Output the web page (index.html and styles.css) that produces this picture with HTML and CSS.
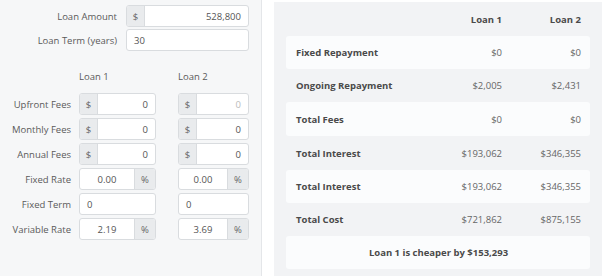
FILE: index.html
```html
<!DOCTYPE html>
<html>
<head>
	<meta charset="utf-8" />
	<title>Loan Comparison</title>
	<link rel="stylesheet" href="styles.css">
</head>
<body>
	<div class="page">
		<div class="inputs">
			<div class="top">
				<label>Loan Amount</label>
				<div class="group"><span class="addon">$</span><span class="field right">528,800</span></div>
				<label>Loan Term (years)</label>
				<div class="group"><span class="field">30</span></div>
			</div>

			<div class="loans">
				<span></span><p class="head">Loan 1</p><p class="head">Loan 2</p>

				<label>Upfront Fees</label>
				<div class="group"><span class="addon">$</span><span class="field right">0</span></div>
				<div class="group"><span class="addon">$</span><span class="field right empty">0</span></div>

				<label>Monthly Fees</label>
				<div class="group"><span class="addon">$</span><span class="field right">0</span></div>
				<div class="group"><span class="addon">$</span><span class="field right">0</span></div>

				<label>Annual Fees</label>
				<div class="group"><span class="addon">$</span><span class="field right">0</span></div>
				<div class="group"><span class="addon">$</span><span class="field right">0</span></div>

				<label>Fixed Rate</label>
				<div class="group"><span class="field center">0.00</span><span class="addon pct">%</span></div>
				<div class="group"><span class="field center">0.00</span><span class="addon pct">%</span></div>

				<label>Fixed Term</label>
				<div class="group"><span class="field">0</span></div>
				<div class="group"><span class="field">0</span></div>

				<label>Variable Rate</label>
				<div class="group"><span class="field center">2.19</span><span class="addon pct">%</span></div>
				<div class="group"><span class="field center">3.69</span><span class="addon pct">%</span></div>
			</div>
		</div>

		<div class="results">
			<div class="row head-row h34"><span></span><span>Loan 1</span><span>Loan 2</span></div>
			<div class="row light"><b>Fixed Repayment</b><span>$0</span><span>$0</span></div>
			<div class="row"><b>Ongoing Repayment</b><span>$2,005</span><span>$2,431</span></div>
			<div class="row light h34"><b>Total Fees</b><span>$0</span><span>$0</span></div>
			<div class="row h34"><b>Total Interest</b><span>$193,062</span><span>$346,355</span></div>
			<div class="row light"><b>Total Interest</b><span>$193,062</span><span>$346,355</span></div>
			<div class="row"><b>Total Cost</b><span>$721,862</span><span>$875,155</span></div>
			<div class="row light summary"><b>Loan 1 is cheaper by $153,293</b></div>
		</div>
	</div>
</body>
</html>
```

FILE: styles.css
```css
* { margin:0; padding:0; box-sizing:border-box; }
body { background:#fff; font-family:"Open Sans", "Liberation Sans", sans-serif; font-size:9.5px; color:#555; }

.page { display:flex; height:276px; }

/* left side: the form */
.inputs { width:262px; height:276px; background:#f6f7f8; border-right:1px solid #e4e6e9; padding-top:5px; }
.top { display:grid; grid-template-columns:126px 123px; row-gap:2px; }
.top label { padding-right:9px; }
label { display:flex; align-items:center; justify-content:flex-end; padding-right:8px; color:#5a5a5a; }

.loans { display:grid; grid-template-columns:79px 99px 71px; row-gap:3px; margin-top:18px; }
.loans .head { height:16px; line-height:16px; margin-bottom:5px; color:#5a5a5a; }
.loans > .group:nth-child(3n+2) { width:77px; }

.group { display:flex; height:22px; background:#fff; border:1px solid #d9dcdf; border-radius:3px; overflow:hidden; }
.addon { width:18px; flex:none; display:flex; align-items:center; justify-content:center; background:#e9ebed; border-right:1px solid #d9dcdf; color:#666; }
.addon.pct { width:21px; border-right:0; border-left:1px solid #d9dcdf; }
.field { flex:1; display:flex; align-items:center; padding:0 7px; color:#555; }
.field.right { justify-content:flex-end; }
.field.center { justify-content:center; }
.field.empty { color:#bbb; }

/* right side: the results */
.results { flex:1; margin:2px 0 0 12px; background:#f2f3f5; padding:0 12px; }
.row { display:grid; grid-template-columns:1fr 90px 79px; align-items:center; height:33px; padding:0 9px 0 10px; border-radius:3px; }
.row.h34 { height:34px; }
.row span { text-align:right; color:#666; }
.row b { color:#4a4a4a; font-weight:700; }
.row.light { background:#fbfcfd; }
.head-row span { color:#4a4a4a; font-weight:700; }
.summary { grid-template-columns:1fr; text-align:center; }
```
